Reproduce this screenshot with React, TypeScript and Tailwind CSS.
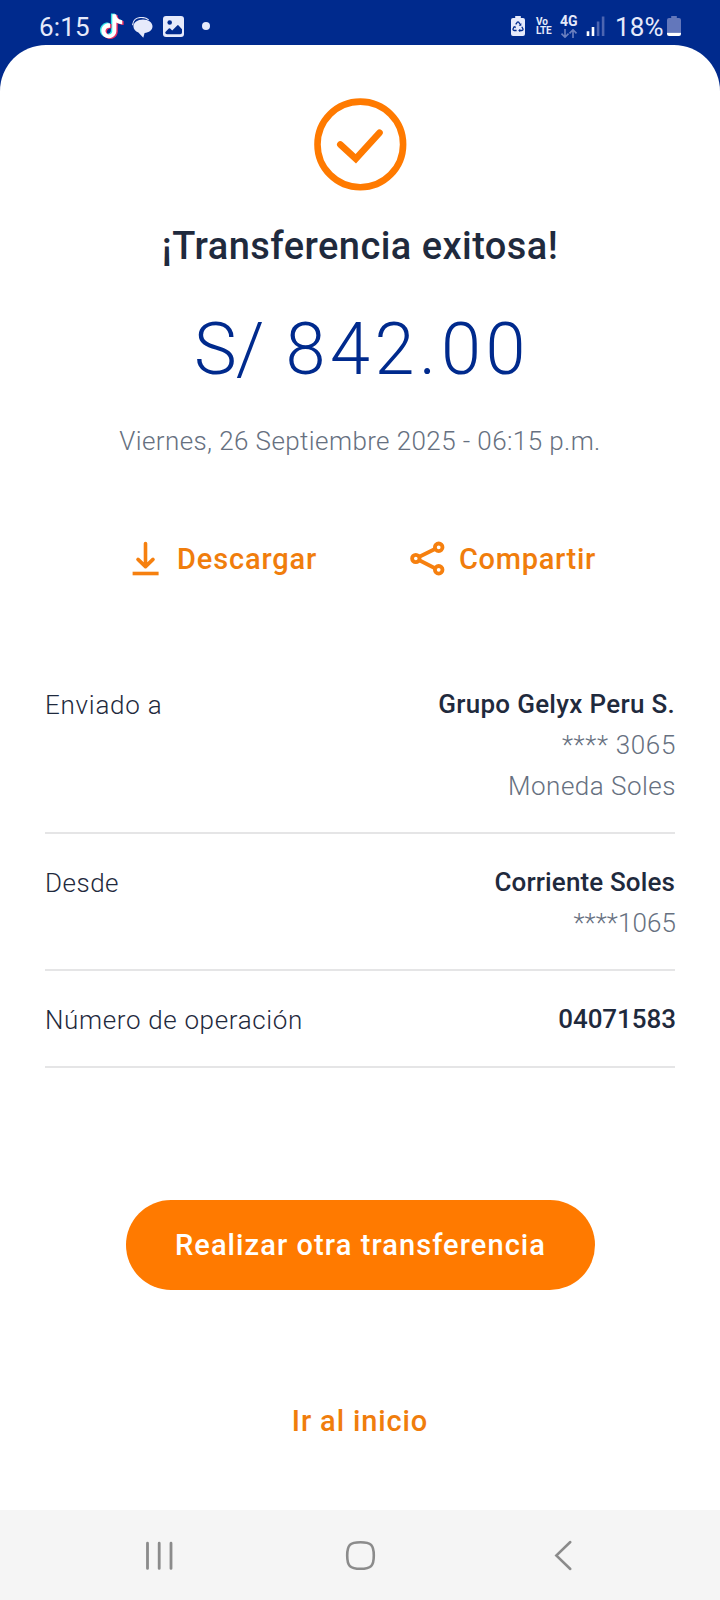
import type { ReactNode } from 'react'

const TIKTOK =
  'M12.525.02c1.31-.02 2.61-.01 3.91-.02.08 1.53.63 3.09 1.75 4.17 1.12 1.11 2.7 1.62 4.24 1.79v4.03c-1.44-.05-2.89-.35-4.2-.97-.57-.26-1.1-.59-1.62-.93-.01 2.92.01 5.84-.02 8.75-.08 1.4-.54 2.79-1.35 3.94-1.31 1.92-3.58 3.17-5.91 3.21-1.43.08-2.86-.31-4.08-1.03-2.02-1.19-3.44-3.37-3.65-5.71-.02-.5-.03-1-.01-1.49.18-1.9 1.12-3.72 2.58-4.96 1.66-1.44 3.98-2.13 6.15-1.72.02 1.48-.04 2.96-.04 4.44-.99-.32-2.15-.23-3.02.37-.63.41-1.11 1.04-1.36 1.75-.21.51-.15 1.07-.14 1.61.24 1.64 1.82 3.02 3.5 2.87 1.12-.01 2.19-.66 2.77-1.61.19-.33.4-.67.41-1.06.1-1.79.06-3.57.07-5.36.01-4.03-.01-8.05.02-12.07z'

function TiktokIcon() {
  return (
    <svg className="w-6 h-[26px]" viewBox="0 0 24 26">
      <g transform="translate(-1.6 .6)">
        <path d={TIKTOK} fill="#35e3e8" />
        <path d={TIKTOK} fill="#ef2f63" transform="translate(2.8 1.4)" />
        <path d={TIKTOK} fill="#fff" transform="translate(1.4 .7)" />
      </g>
    </svg>
  )
}

function ChatIcon() {
  return (
    <svg className="w-[21px] h-[21px]" viewBox="0 0 21 21">
      <path d="M.7 7.6C1 3.4 4.4.7 8.8.5c3-.1 5.600.5 7.500 2.100" fill="none" stroke="#e6eafb" strokeWidth="1.2" strokeLinecap="round" />
      <path d="M11 2.400c5.600 0 9.500 2.900 9.500 6.900 0 4-3.600 6.300-7.900 6.700l-1.300 4.700-4.900-5.200C3.500 14.400 1.400 12.300 1.400 9.300 1.400 5.300 5.500 2.400 11 2.400z" fill="#e6eafb" />
    </svg>
  )
}

function PhotoIcon() {
  return (
    <svg className="w-[21px] h-[21px]" viewBox="0 0 21 21">
      <rect width="21" height="21" rx="3" fill="#e6eafb" />
      <circle cx="6.700" cy="6.500" r="2.300" fill="#002a8d" />
      <path d="M2.200 16.200 5.800 12.600q.7-.6 1.400 0l2 2 5-5.200q.7-.7 1.400 0l3.400 3.800v3.200q0 1.800-1.800 1.800H4q-1.800 0-1.800-2z" fill="#002a8d" />
    </svg>
  )
}

function PowerSaveIcon() {
  return (
    <svg className="w-[14px] h-5" viewBox="0 0 14 20">
      <path d="M4.200 0h5.600v2H12q2 0 2 2v14q0 2-2 2H2q-2 0-2-2V4q0-2 2-2h2.200z" fill="#e6eafb" />
      <path d="M4.700 8.400 6.200 6.300q.8-.9 1.600 0L9.300 8.500M10.800 10.800l1.100 2q.5 1.500-1 1.700H8.600M5.600 14.500H3.200q-1.600-.2-1.100-1.700L3 11" fill="none" stroke="#002a8d" strokeWidth="1.300" />
      <path d="M10.300 7v2.700H7.700zM9.200 12.800v3.500l-2-1.750zM1.800 11 4.300 9.700l.6 2.600z" fill="#002a8d" />
    </svg>
  )
}

function StatusBar() {
  return (
    <header className="flex h-[45px] items-start text-[#e6eafb]">
      <span className="ml-[39px] mt-[12px] w-[61px] text-[26px] leading-[30px] tracking-[0.16px]">6:15</span>
      <span className="mt-[13px] w-8"><TiktokIcon /></span>
      <span className="mt-[17px] w-[31px]"><ChatIcon /></span>
      <span className="mt-4 w-[39px]"><PhotoIcon /></span>
      <span className="mt-[22px] size-2 rounded-full bg-[#e6eafb]" />

      <span className="ml-auto mt-4 w-[25px]"><PowerSaveIcon /></span>
      <span className="mt-[17px] w-6 text-[10px] leading-[9px] font-bold">
        <span className="block">Vo</span>
        <span className="block tracking-[-0.3px]">LTE</span>
      </span>
      <span className="mt-[14px] w-[26px]">
        <span className="block text-[14px] leading-[14px] font-bold">4G</span>
        <svg className="mt-px w-[18px] h-[9px]" viewBox="0 0 18 9" fill="none" stroke="#6c80c0" strokeWidth="1.600">
          <path d="M5 0v8M1.500 4.600 5 8.200l3.500-3.600M13 9V1M9.500 4.400 13 .8l3.500 3.600" />
        </svg>
      </span>
      <svg className="mt-4 w-[19px] h-5" viewBox="0 0 19 20">
        <path d="M.7 15.300h2.600V20H.7z M5.700 11h2.600v9H5.700z" fill="#fff" />
        <path d="M10.800 5.500h2.600V20h-2.600z M15.800 .5h2.600V20h-2.600z" fill="#4c65b1" />
      </svg>
      <span className="ml-[10px] mt-[12px] w-[52px] text-[26px] leading-[30px] tracking-[0.2px]">18%</span>
      <svg className="mr-[39px] mt-4 w-[14px] h-5" viewBox="0 0 14 20">
        <path d="M4.200 0h5.600v2H12q2 0 2 2v12.800H0V4q0-2 2-2h2.200z" fill="#6377bb" />
        <path d="M0 16.800h14V18q0 2-2 2H2q-2 0-2-2z" fill="#fff" />
      </svg>
    </header>
  )
}

function SuccessIcon() {
  return (
    <svg className="w-[94px] h-[94px]" viewBox="0 0 94 94" fill="none" stroke="#ff7a00">
      <circle cx="47.300" cy="47.400" r="42.800" strokeWidth="6.600" />
      <path d="M27.300 47.500 42.800 61.800 66.500 35.700" strokeWidth="6.600" strokeLinecap="round" />
    </svg>
  )
}

function DownloadIcon() {
  return (
    <svg className="w-7 h-9" viewBox="0 0 28 36" fill="none" stroke="#f6800f" strokeWidth="3.600" strokeLinecap="round" strokeLinejoin="round">
      <path d="M13.500 2.600v22.500M6 18.400l7.500 7.200 7.500-7.200" />
      <path d="M.6 32.500h26" strokeLinecap="butt" />
    </svg>
  )
}

function ShareIcon() {
  return (
    <svg className="w-[35px] h-9" viewBox="0 0 35 36" fill="none" stroke="#f6800f" strokeWidth="3.800">
      <circle cx="5.800" cy="17.500" r="3.700" />
      <circle cx="28.700" cy="6.300" r="3.800" />
      <circle cx="28.700" cy="28.800" r="3.800" />
      <path d="M9.300 15.800 25 8M9.300 19.300 25 27.200" />
    </svg>
  )
}

function Row({ label, labelClass, className, children }: {
  label: string
  labelClass: string
  className: string
  children: ReactNode
}) {
  return (
    <div className={`flex justify-between border-b-2 border-[#e5e5e6] text-[26px] leading-[41px] ${className}`}>
      <span className={`pt-px font-light text-[#1f2a3d] ${labelClass}`}>{label}</span>
      <div className="flex flex-col items-end">{children}</div>
    </div>
  )
}

function NavBar() {
  return (
    <nav className="mt-auto flex h-[90px] items-center bg-[#f5f5f5] pl-[145px] text-[#8b8b8b]">
      <svg className="w-[29px] h-[29px]" viewBox="0 0 29 29" fill="none" stroke="currentColor" strokeWidth="2.800" strokeLinecap="round">
        <path d="M2.500 2.200v25.200M14.200 2.200v25.200M26 2.200v25.200" />
      </svg>
      <svg className="ml-[171px] w-[31px] h-[31px]" viewBox="0 0 31 31" fill="none" stroke="currentColor" strokeWidth="2.600">
        <path d="M15.500 2.200c10.500 0 13.300 2.800 13.300 13.300S26 28.800 15.500 28.800 2.200 26 2.200 15.500 5 2.200 15.500 2.200z" />
      </svg>
      <svg className="ml-[177px] w-5 h-[31px]" viewBox="0 0 20 31" fill="none" stroke="currentColor" strokeWidth="2.500" strokeLinecap="round">
        <path d="M17.300 2 3.300 15.500l14 13.500" />
      </svg>
    </nav>
  )
}

export default function App() {
  return (
    <div className="flex h-[1600px] w-[720px] flex-col overflow-hidden bg-[#002a8d] font-['Roboto',sans-serif]">
      <StatusBar />

      <main className="flex flex-1 flex-col rounded-t-[46px] bg-white pt-[52px]">
        <div className="flex flex-col items-center whitespace-nowrap">
          <SuccessIcon />
          <h1 className="mt-[31px] text-[38px] leading-[48px] font-medium tracking-[0.45px] text-[#1f2a3d]">¡Transferencia exitosa!</h1>
          <p className="mt-[38px] pl-1 text-[72px] leading-[84px] font-light tracking-[4.6px] text-[#002a8d]">
            <span className="tracking-[-1px]">S/</span> 842.00
          </p>
          <p className="mt-[33px] text-[26px] leading-8 font-light tracking-[0.4px] text-[#667080]">
            Viernes, 26 Septiembre 2025 - 06:15 p.m.
          </p>
        </div>

        {/* Actions */}
        <div className="mt-[84px] flex pl-[132px] text-[29px] leading-9 font-medium text-[#f07d0c]">
          <button className="flex w-[278px] gap-[17px]">
            <DownloadIcon />
            <span className="tracking-[0.85px]">Descargar</span>
          </button>
          <button className="flex gap-[14px]">
            <ShareIcon />
            <span className="tracking-[0.68px]">Compartir</span>
          </button>
        </div>

        {/* Details */}
        <section className="mx-[45px] mt-[107px]">
          <Row label="Enviado a" labelClass="tracking-[0.75px]" className="pb-[25px]">
            <span className="font-medium tracking-[0.3px] text-[#1f2a3d]">Grupo Gelyx Peru S.</span>
            <span className="-mr-px font-light tracking-[0.66px] text-[#667080]">**** 3065</span>
            <span className="-mr-px font-light tracking-[0.5px] text-[#667080]">Moneda Soles</span>
          </Row>
          <Row label="Desde" labelClass="tracking-[0.5px]" className="pt-7 pb-[25px]">
            <span className="font-medium tracking-[0.13px] text-[#1f2a3d]">Corriente Soles</span>
            <span className="-mr-px font-light tracking-[0.1px] text-[#667080]">****1065</span>
          </Row>
          <Row label="Número de operación" labelClass="tracking-[0.65px]" className="pt-7 pb-[25px]">
            <span className="-mr-px font-medium tracking-[-0.05px] text-[#1f2a3d]">04071583</span>
          </Row>
        </section>

        <div className="mt-[132px] flex flex-col items-center text-[29px] font-medium">
          <button className="h-[90px] w-[469px] rounded-full bg-[#ff7a00] pt-0.5 pl-px tracking-[1.08px] text-white">
            Realizar otra transferencia
          </button>
          <button className="mt-[113px] leading-9 tracking-[0.88px] text-[#f07d0c]">Ir al inicio</button>
        </div>

        <NavBar />
      </main>
    </div>
  )
}
